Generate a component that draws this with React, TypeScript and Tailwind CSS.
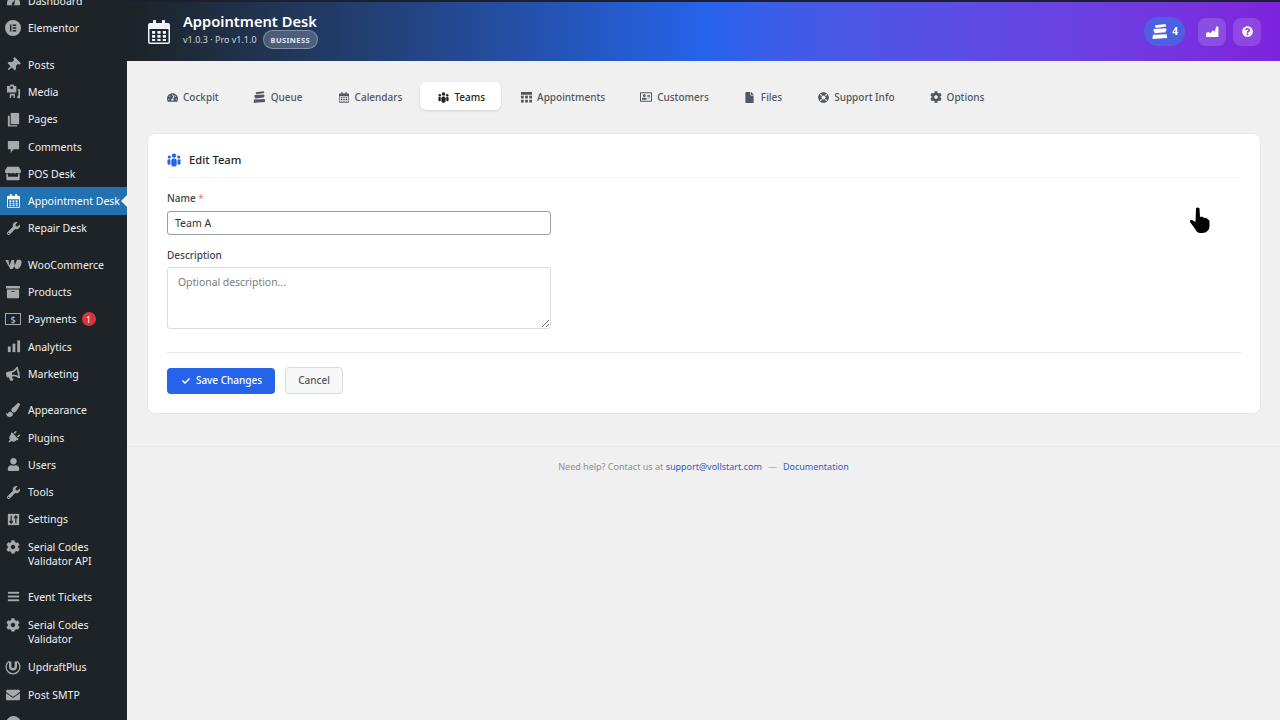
import type { ReactNode } from "react"
import {
  FaArchive, FaBullhorn, FaCheck, FaCog, FaEnvelope, FaFile,
  FaLifeRing, FaPaintBrush, FaPlug, FaQuestionCircle, FaRegAddressCard, FaStore,
  FaTachometerAlt, FaThumbtack, FaUser, FaWrench,
} from "react-icons/fa"

function TicketStack({ className }: { className?: string }) {
  return (
    <svg viewBox="0 0 20 18" className={className} fill="currentColor">
      <path d="M4 1.500 16.500 0l1 3L5 4.800z" />
      <path d="M2.500 6 17 5l1 2.800-1.500.9.600 1.200L3 11.200l.5-1.500L2 8.200z" />
      <path d="M1.500 13 18 12.200l.600 4.600L1 18z" />
    </svg>
  )
}

function CalendarIcon({ className }: { className?: string }) {
  return (
    <svg viewBox="0 0 22 24" className={className} fill="currentColor">
      <path fillRule="evenodd" d="M2 3h3V1a1.500 1.500 0 0 1 3 0v2h6V1a1.500 1.500 0 0 1 3 0v2h3a2 2 0 0 1 2 2v17a2 2 0 0 1-2 2H2a2 2 0 0 1-2-2V5a2 2 0 0 1 2-2zm-.5 6v13a.5.5 0 0 0 .5.5h18a.5.5 0 0 0 .5-.5V9z" />
      <rect x="4" y="11" width="3.200" height="2.800" />
      <rect x="9.400" y="11" width="3.200" height="2.800" />
      <rect x="14.800" y="11" width="3.200" height="2.800" />
      <rect x="4" y="15" width="3.200" height="2.800" />
      <rect x="9.400" y="15" width="3.200" height="2.800" />
      <rect x="14.800" y="15" width="3.200" height="2.800" />
      <rect x="4" y="19" width="3.200" height="2" />
      <rect x="9.400" y="19" width="3.200" height="2" />
      <rect x="14.800" y="19" width="3.200" height="2" />
    </svg>
  )
}

function PeopleIcon({ className }: { className?: string }) {
  return (
    <svg viewBox="0 0 14 14" className={className} fill="currentColor">
      <circle cx="7" cy="2.600" r="2.200" />
      <circle cx="2.300" cy="4" r="1.600" />
      <circle cx="11.700" cy="4" r="1.600" />
      <rect x="4.300" y="5.600" width="5.400" height="8" rx="2.200" />
      <rect x="0.500" y="6.200" width="3" height="5.600" rx="1.400" />
      <rect x="10.500" y="6.200" width="3" height="5.600" rx="1.400" />
    </svg>
  )
}

function AppointmentsIcon() {
  return (
    <svg viewBox="0 0 12 12" className="h-[11px] w-[11px]" fill="currentColor">
      <rect x="0" y="0" width="12" height="3" />
      <rect x="0" y="4" width="3" height="3" />
      <rect x="4.500" y="4" width="3" height="3" />
      <rect x="9" y="4" width="3" height="3" />
      <rect x="0" y="8.500" width="3" height="3" />
      <rect x="4.500" y="8.500" width="3" height="3" />
      <rect x="9" y="8.500" width="3" height="3" />
    </svg>
  )
}

const gray = "h-[15px] w-[15px]"

const ElementorIcon = (
  <svg viewBox="0 0 16 16" className="h-[16px] w-[16px]" fill="currentColor">
    <path fillRule="evenodd" d="M8 0a8 8 0 1 1 0 16A8 8 0 0 1 8 0zM5 4.500v7h1.400v-7zm2.600 0v1.400h3.600V4.500zm0 2.800v1.400h3.600V7.300zm0 2.800v1.400h3.600v-1.400z" />
  </svg>
)
const DashboardIcon = (
  <svg viewBox="0 0 16 16" className={gray} fill="currentColor">
    <path d="M8 3a7 7 0 0 0-7 7v2h14v-2a7 7 0 0 0-7-7zm1 6.500a1.500 1.500 0 1 1-2-.5l3-3z" />
  </svg>
)
const MediaIcon = (
  <svg viewBox="0 0 16 16" className={gray} fill="currentColor">
    <path fillRule="evenodd" d="M1 2h3l1-1.500h3L9 2h2v7H1zm3.500 2a1.500 1.500 0 1 0 3 0 1.500 1.500 0 0 0-3 0z" />
    <path d="M12.500 5.500H15v8.500a1.500 1.500 0 0 1-3 0v-1.500h1.200V7h-.7zM4 10.500h5.500V15H8v-2.800H5.500V15H4z" />
  </svg>
)
const PagesIcon = (
  <svg viewBox="0 0 16 16" className={gray} fill="currentColor">
    <path d="M5 1h9v12H5z" />
    <path d="M2 4h2v10h8v1.500H2z" />
  </svg>
)
const CommentIcon = (
  <svg viewBox="0 0 16 16" className={gray} fill="currentColor">
    <path d="M2 2h12v9H8l-3 4v-4H2z" />
  </svg>
)
const BarsIcon = (
  <svg viewBox="0 0 16 16" className={gray} fill="currentColor">
    <rect x="2" y="8" width="3" height="6" />
    <rect x="7" y="5" width="3" height="9" />
    <rect x="12" y="1.500" width="3" height="12.500" />
  </svg>
)
const WooIcon = (
  <svg viewBox="0 0 18 12" className="h-[11px] w-[17px]" fill="currentColor">
    <path d="M0 1h3.500l1 6 2.500-6h2.500l.8 6 2.500-6c2-.3 5-.8 5 2.500 0 3-2.500 7.500-5 7.500-1.500 0-2.500-1-2.800-3L8 11H5.500z" />
  </svg>
)
const SlidersIcon = (
  <svg viewBox="0 0 16 16" className={gray}>
    <rect x="2" y="2" width="12" height="12" fill="currentColor" />
    <path d="M5.500 4v8M3.800 9.500l1.700 2.500 1.700-2.500M10.500 12V4M8.800 6.500 10.500 4l1.700 2.500" stroke="#1d2327" strokeWidth="1.200" fill="none" />
  </svg>
)
const LinesIcon = (
  <svg viewBox="0 0 16 16" className={gray} fill="currentColor">
    <rect x="2" y="3" width="12" height="2" />
    <rect x="2" y="7" width="12" height="2" />
    <rect x="2" y="11" width="12" height="2" />
  </svg>
)
const UpdraftIcon = (
  <svg viewBox="0 0 16 16" className="h-[16px] w-[16px]" fill="none" stroke="currentColor">
    <path d="M4 2.300a6.900 6.900 0 1 0 8 0" strokeWidth="1.300" />
    <path d="M5.200 2.500v5a2.800 2.800 0 0 0 5.600 0v-5" strokeWidth="2.400" />
  </svg>
)

type MenuItem = { label: ReactNode; icon: ReactNode; sep?: boolean; tall?: boolean; active?: boolean; badge?: string; extra?: string }

const menu: MenuItem[] = [
  { label: "Dashboard", icon: DashboardIcon },
  { label: "Elementor", icon: ElementorIcon },
  { label: "Posts", icon: <FaThumbtack className="h-[14px] w-[14px] rotate-45" />, sep: true },
  { label: "Media", icon: MediaIcon },
  { label: "Pages", icon: PagesIcon },
  { label: "Comments", icon: CommentIcon },
  { label: "POS Desk", icon: <FaStore className="h-[15px] w-[16px]" /> },
  { label: "Appointment Desk", icon: <CalendarIcon className="h-[14px] w-[13px]" />, active: true },
  { label: "Repair Desk", icon: <FaWrench className="h-[13px] w-[13px]" /> },
  { label: "WooCommerce", icon: WooIcon, sep: true },
  { label: "Products", icon: <FaArchive className="h-[14px] w-[14px]" /> },
  { label: "Payments", icon: <span className="flex h-[12px] w-[16px] items-center justify-center border border-[#a7aaad] text-[9px] leading-none text-[#c3c4c7]">$</span>, badge: "1" },
  { label: "Analytics", icon: BarsIcon },
  { label: "Marketing", icon: <FaBullhorn className="h-[14px] w-[14px] -rotate-12" /> },
  { label: "Appearance", icon: <FaPaintBrush className="h-[14px] w-[14px]" />, sep: true },
  { label: "Plugins", icon: <FaPlug className="h-[13px] w-[13px] rotate-45" /> },
  { label: "Users", icon: <FaUser className="h-[13px] w-[13px]" /> },
  { label: "Tools", icon: <FaWrench className="h-[13px] w-[13px]" /> },
  { label: "Settings", icon: SlidersIcon },
  { label: <>Serial Codes<br />Validator API</>, icon: <FaCog className="h-[14px] w-[14px]" />, tall: true },
  { label: "Event Tickets", icon: LinesIcon, sep: true },
  { label: <>Serial Codes<br />Validator</>, icon: <FaCog className="h-[14px] w-[14px]" />, tall: true, extra: "mt-[0.7px]" },
  { label: "UpdraftPlus", icon: UpdraftIcon, extra: "mt-[1px]" },
  { label: "Post SMTP", icon: <FaEnvelope className="h-[14px] w-[14px]" /> },
  { label: "Collapse Menu", icon: <span className="h-[15px] w-[15px] rounded-full bg-[#a7aaad]" />, extra: "mt-[2px]" },
]

const tabs = [
  { label: "Cockpit", icon: <FaTachometerAlt className="h-[11px] w-[11px]" /> },
  { label: "Queue", icon: <TicketStack className="h-[12px] w-[13px]" /> },
  { label: "Calendars", icon: <CalendarIcon className="h-[11px] w-[10px]" /> },
  { label: "Teams", icon: <PeopleIcon className="h-[11px] w-[11px]" />, active: true },
  { label: "Appointments", icon: <AppointmentsIcon /> },
  { label: "Customers", icon: <FaRegAddressCard className="h-[12px] w-[12px]" /> },
  { label: "Files", icon: <FaFile className="h-[11px] w-[9px]" /> },
  { label: "Support Info", icon: <FaLifeRing className="h-[11px] w-[11px]" /> },
  { label: "Options", icon: <FaCog className="h-[12px] w-[12px]" /> },
]

function Sidebar() {
  return (
    <aside className="w-[127px] shrink-0 overflow-hidden bg-[#1d2327] text-[10.500px] leading-[14px] text-[#f0f0f1]">
      <ul className="mt-[-12.600px]">
        {menu.map((item, i) => (
          <li
            key={i}
            className={`relative flex ${item.tall ? "h-[41.300px] items-start pt-[7px]" : "h-[27.300px] items-center"} ${item.sep ? "mt-[9px]" : ""} ${item.extra ?? ""} ${item.active ? "bg-[#2271b1] text-white" : ""}`}
          >
            <span className={`flex w-[28px] shrink-0 justify-center pr-[2px] ${item.active ? "text-white" : "text-[#a7aaad]"}`}>{item.icon}</span>
            <span className="whitespace-nowrap">{item.label}</span>
            {item.badge && (
              <span className="ml-[5px] flex h-[14px] w-[14px] items-center justify-center rounded-full bg-[#d63638] text-[9px] leading-none text-white">{item.badge}</span>
            )}
            {item.active && (
              <span className="absolute right-0 top-1/2 h-0 w-0 -translate-y-1/2 border-y-[6px] border-r-[6px] border-y-transparent border-r-[#f0f0f1]" />
            )}
          </li>
        ))}
      </ul>
    </aside>
  )
}

function Header() {
  return (
    <header className="flex h-[61px] shrink-0 items-center justify-between border-t-2 border-[#1c1f2e] bg-gradient-to-r from-[#1d2327] via-[#2563eb] to-[#7e22dc] pl-[21px] pr-[19px] text-white">
      <div className="flex items-center gap-[13px]">
        <CalendarIcon className="h-[24px] w-[22px] text-[#eef2f7]" />
        <div className="pb-[5px]">
          <div className="text-[14.700px] font-semibold leading-[20px]">Appointment Desk</div>
          <div className="mt-[1px] flex h-[16px] items-center gap-[6px] text-[9px] leading-[14px] text-[#cbd5e1]">
            <span>v1.0.3 · Pro v1.1.0</span>
            <span className="rounded-full border border-white/30 bg-white/20 px-[7px] py-[1.500px] text-[7.500px] font-bold tracking-[0.4px] text-[#e2e8f0]">BUSINESS</span>
          </div>
        </div>
      </div>
      <div className="flex items-center gap-[7px]">
        <div className="mr-[6px] flex h-[29px] w-[41px] items-center justify-center gap-[3px] rounded-full bg-[#4f5fe3] text-[10px] font-bold">
          <TicketStack className="h-[15px] w-[18px]" />
          4
        </div>
        <button className="flex h-[28px] w-[28px] items-center justify-center rounded-lg bg-white/15">
          <svg viewBox="0 0 14 12" className="h-[11px] w-[13px]" fill="currentColor">
            <path d="M0 12V7.500l2.500-1 2 1.500 3-3.500 2 1.500L11 .8c1-.6 2.500-.3 2.500 1V12z" />
          </svg>
        </button>
        <button className="flex h-[28px] w-[28px] items-center justify-center rounded-lg bg-white/15">
          <FaQuestionCircle className="h-[11px] w-[11px]" />
        </button>
      </div>
    </header>
  )
}

function Tabs() {
  return (
    <nav className="flex items-center gap-[2px] pl-[22px] pt-[21px]">
      {tabs.map((t) => (
        <div
          key={t.label}
          className={`flex h-[28px] items-center gap-[4px] rounded-md px-[16px] pt-[2px] text-[10px] font-medium ${t.active ? "bg-white text-[#1d2327] shadow-sm" : "text-[#50575e]"}`}
        >
          <span className="flex w-[14px] justify-center">{t.icon}</span>
          <span>{t.label}</span>
        </div>
      ))}
    </nav>
  )
}

function EditCard() {
  return (
    <section className="ml-[20px] mr-[19px] mt-[23px] h-[281px] rounded-lg border border-[#e8e8ea] bg-white px-[19px]">
      <h2 className="flex h-[44px] items-center gap-[8px] border-b border-[#f3f3f4] pt-[9px] text-[11.200px] font-medium text-[#1d2327]">
        <PeopleIcon className="h-[14px] w-[14px] text-[#2563eb]" />
        Edit Team
      </h2>
      <label className="mt-[13px] block text-[10px] font-medium leading-[14px] text-[#3c434a]">
        Name <span className="font-normal text-[#d63638]/70">*</span>
      </label>
      <input
        readOnly
        value="Team A"
        className="mt-[6px] block h-[24px] w-[384px] rounded-[3px] border border-[#9a9da1] px-[7px] text-[10.500px] text-[#2c3338] outline-none"
      />
      <label className="mt-[13px] block text-[10px] font-medium leading-[14px] text-[#3c434a]">Description</label>
      <textarea
        readOnly
        placeholder="Optional description..."
        className="mt-[5px] block h-[62px] w-[384px] rounded-[3px] border border-[#dcdcde] px-[10px] py-[7px] text-[10.400px] text-[#2c3338] outline-none placeholder:text-[#787c82]"
      />
      <div className="mt-[23px] flex items-center gap-[10px] border-t border-[#e8e8ea] pt-[14px]">
        <button className="flex h-[26px] w-[108px] items-center justify-center gap-[6px] rounded-[4px] bg-[#2563eb] pl-[2px] text-[10px] font-medium text-white">
          <FaCheck className="h-[8px] w-[8px]" />
          Save Changes
        </button>
        <button className="h-[27px] w-[58px] rounded-[4px] border border-[#dcdcde] bg-[#f6f7f7] text-[10px] font-medium text-[#50575e]">
          Cancel
        </button>
      </div>
    </section>
  )
}

function Footer() {
  return (
    <footer className="mt-[32px] border-t border-[#e8e8ea] pt-[13px] text-center text-[9px] leading-[14px] text-[#8c8f94]">
      Need help? Contact us at <a className="text-[#3858c4]">support@vollstart.com</a>
      <span className="mx-[6px]">—</span>
      <a className="text-[#3858c4]">Documentation</a>
    </footer>
  )
}

export default function App() {
  return (
    <div className="relative flex h-screen w-full overflow-hidden bg-[#f0f0f1] font-['Noto_Sans',sans-serif]">
      <Sidebar />
      <main className="min-w-0 flex-1">
        <Header />
        <Tabs />
        <EditCard />
        <Footer />
      </main>
      <svg viewBox="0 0 20 26" className="absolute left-[1190px] top-[207px] h-[26px] w-[20px] text-black" fill="currentColor">
        <path d="M6 1.500a2 2 0 0 1 3.500 0L10 10c2-.5 3 0 4 1 2-.5 3 .5 4 1.500 1 0 1.500 1 1.500 2.500v4c0 4-3 7-7 7h-2c-3 0-4.500-2-6-5L0 15c-.5-1.500 1-2.500 2.500-1.800L5.500 15z" />
      </svg>
    </div>
  )
}
